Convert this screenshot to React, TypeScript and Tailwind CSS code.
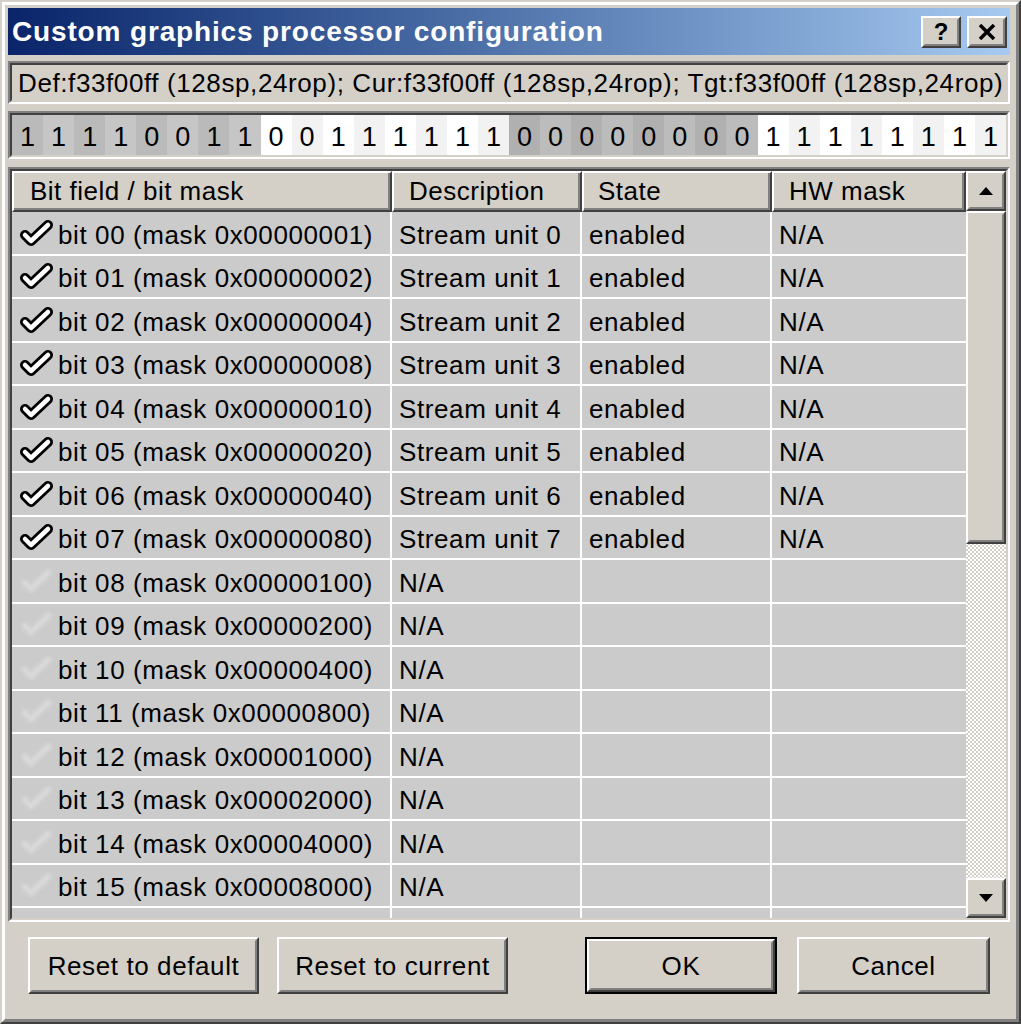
import React from 'react';

const FONT = { fontFamily: '"Liberation Sans", Arial, sans-serif' };

const BITS = 'f33f00ff'
  .split('')
  .map(h => parseInt(h, 16).toString(2).padStart(4, '0'))
  .join('')
  .split('');

// background per bit cell: 4 groups of 8, alternating shade inside a group
const cellBg = (i: number) => {
  const group = Math.floor(i / 8);
  const odd = i % 2 === 1;
  if (group === 0) return odd ? 'bg-[#c6c6c6]' : 'bg-[#bababa]';
  if (group === 1) return odd ? 'bg-[#f2f2f2]' : 'bg-white';
  if (group === 2) return odd ? 'bg-[#bcbcbc]' : 'bg-[#b0b0b0]';
  return odd ? 'bg-[#f2f2f2]' : 'bg-white';
};

// 16 full rows, the 17th only peeks out under the last one
const ROWS = Array.from({ length: 17 }, (_, i) => {
  const enabled = i < 8;
  const mask = (1 << i >>> 0).toString(16).padStart(8, '0');
  const last = i === 16;
  return {
    enabled,
    last,
    field: last ? '' : `bit ${String(i).padStart(2, '0')} (mask 0x${mask})`,
    desc: last ? '' : enabled ? `Stream unit ${i}` : 'N/A',
    state: enabled ? 'enabled' : '',
    hw: enabled ? 'N/A' : '',
  };
});

function Check({ on }: { on: boolean }) {
  return (
    <svg width="36" height="30" viewBox="0 0 36 30" className="shrink-0">
      <polyline
        points="6,17 12,23 29,7"
        fill="none"
        stroke={on ? '#000' : '#d0d0d0'}
        strokeWidth="10"
        strokeLinecap="round"
        strokeLinejoin="round"
      />
      <polyline
        points="6,17 12,23 29,7"
        fill="none"
        stroke={on ? '#fff' : '#d8d8d8'}
        strokeWidth="4.5"
        strokeLinecap="round"
        strokeLinejoin="round"
      />
    </svg>
  );
}

// raised 3d frame (classic windows button look)
function Raised({ className = '', children }: { className?: string; children?: React.ReactNode }) {
  return (
    <div className={`border-2 border-t-white border-l-white border-r-[#404040] border-b-[#404040] bg-[#d4d0c8] ${className}`}>
      <div className="w-full h-full border-2 border-t-[#d4d0c8] border-l-[#d4d0c8] border-r-[#808080] border-b-[#808080] flex items-center justify-center">
        {children}
      </div>
    </div>
  );
}

function Sunken({ className = '', children }: { className?: string; children?: React.ReactNode }) {
  return (
    <div className={`border-2 border-t-[#808080] border-l-[#808080] border-r-white border-b-white ${className}`}>
      <div className="w-full h-full border-2 border-t-[#404040] border-l-[#404040] border-r-[#d4d0c8] border-b-[#d4d0c8] overflow-hidden">
        {children}
      </div>
    </div>
  );
}

function HeaderCell({ w, label, pl }: { w: string; label: string; pl: string }) {
  return (
    <div className={`${w} h-full shrink-0 border-2 border-t-white border-l-white border-r-[#404040] border-b-[#404040] bg-[#d4d0c8]`}>
      <div className={`h-full border-b-2 border-r-2 border-[#808080] flex items-center pt-[2px] ${pl}`}>{label}</div>
    </div>
  );
}

function Button({ label, primary = false, w }: { label: string; primary?: boolean; w: string }) {
  const btn = (
    <Raised className={`h-full ${primary ? 'w-full' : w}`}>
      <span className="text-[26px] tracking-[0.6px] text-black pt-[1px]">{label}</span>
    </Raised>
  );
  if (!primary) return btn;
  return <div className={`${w} h-full border-2 border-black`}>{btn}</div>;
}

export default function App() {
  return (
    <div className="w-[1021px] h-[1024px] overflow-hidden" style={FONT}>
      <div className="w-full h-full bg-[#d4d0c8] border-2 border-t-[#d4d0c8] border-l-[#d4d0c8] border-r-[#404040] border-b-[#404040]">
        <div className="w-full h-full border-[3px] border-t-white border-l-white border-r-[#808080] border-b-[#808080] pt-[3px] pl-[3px] pr-[6px] flex flex-col">
          {/* title bar */}
          <div className="h-[47px] shrink-0 flex items-center justify-between bg-gradient-to-r from-[#0a246a] to-[#a6caf0] pl-[4px] pr-[3px]">
            <span className="text-white font-bold text-[28px] tracking-[0.85px]">Custom graphics processor configuration</span>
            <div className="flex gap-[6px]">
              <Raised className="w-[40px] h-[32px]">
                <span className="font-bold text-[24px] leading-none text-black">?</span>
              </Raised>
              <Raised className="w-[40px] h-[32px]">
                <svg width="18" height="16" viewBox="0 0 18 16">
                  <path d="M2 1 L16 15 M16 1 L2 15" stroke="#000" strokeWidth="3.5" />
                </svg>
              </Raised>
            </div>
          </div>

          {/* value summary */}
          <Sunken className="mt-[6px] h-[43px] shrink-0">
            <div className="h-full flex items-center pl-[6px] pt-[2px] text-[26px] text-black whitespace-nowrap tracking-[0.6px]">
              Def:f33f00ff (128sp,24rop); Cur:f33f00ff (128sp,24rop); Tgt:f33f00ff (128sp,24rop)
            </div>
          </Sunken>

          {/* bit strip */}
          <Sunken className="mt-[7px] h-[48px] shrink-0">
            <div className="h-full grid grid-cols-[repeat(32,minmax(0,1fr))]">
              {BITS.map((b, i) => (
                <div key={i} className={`${cellBg(i)} flex items-center justify-center pt-[2px] text-[27px] text-black`}>
                  {b}
                </div>
              ))}
            </div>
          </Sunken>

          {/* list view */}
          <Sunken className="mt-[8px] h-[755px] shrink-0">
            <div className="h-full flex bg-[#d4d0c8]">
              <div className="flex-1 flex flex-col overflow-hidden">
                <div className="h-[41px] shrink-0 flex text-[26px] text-black tracking-[0.5px]">
                  <HeaderCell w="w-[380px]" label="Bit field / bit mask" pl="pl-[16px]" />
                  <HeaderCell w="w-[190px]" label="Description" pl="pl-[15px]" />
                  <HeaderCell w="w-[190px]" label="State" pl="pl-[14px]" />
                  <HeaderCell w="w-[194px]" label="HW mask" pl="pl-[15px]" />
                </div>
                <div className="flex-1 overflow-hidden bg-[#cbcbcb]">
                  {ROWS.map((r, i) => (
                    <div key={i} className="h-[43.5px] flex border-b-2 border-white text-[26px] text-black tracking-[0.6px] whitespace-nowrap">
                      <div className="w-[380px] shrink-0 border-r-2 border-white flex items-center pl-[7px] gap-[3px]">
                        {!r.last && <Check on={r.enabled} />}
                        <span className="pt-[5px]">{r.field}</span>
                      </div>
                      <div className="w-[190px] shrink-0 border-r-2 border-white flex items-center pl-[7px] pt-[5px]">{r.desc}</div>
                      <div className="w-[190px] shrink-0 border-r-2 border-white flex items-center pl-[7px] pt-[5px]">{r.state}</div>
                      <div className="flex-1 flex items-center pl-[7px] pt-[5px]">{r.hw}</div>
                    </div>
                  ))}
                </div>
              </div>

              {/* scrollbar */}
              <div className="w-[40px] shrink-0 flex flex-col bg-[repeating-conic-gradient(#d4d0c8_0_25%,#ffffff_0_50%)] bg-[length:4px_4px]">
                <Raised className="h-[40px] shrink-0">
                  <svg width="14" height="8" viewBox="0 0 14 8"><path d="M7 0 L14 8 L0 8 Z" fill="#000" /></svg>
                </Raised>
                <Raised className="h-[333px] shrink-0" />
                <div className="flex-1" />
                <Raised className="h-[40px] shrink-0">
                  <svg width="14" height="8" viewBox="0 0 14 8"><path d="M0 0 L14 0 L7 8 Z" fill="#000" /></svg>
                </Raised>
              </div>
            </div>
          </Sunken>

          {/* buttons */}
          <div className="mt-[15px] h-[57px] shrink-0 flex pl-[20px]">
            <Button label="Reset to default" w="w-[231px]" />
            <div className="w-[18px]" />
            <Button label="Reset to current" w="w-[231px]" />
            <div className="w-[77px]" />
            <Button label="OK" primary w="w-[192px]" />
            <div className="w-[20px]" />
            <Button label="Cancel" w="w-[193px]" />
          </div>
        </div>
      </div>
    </div>
  );
}
